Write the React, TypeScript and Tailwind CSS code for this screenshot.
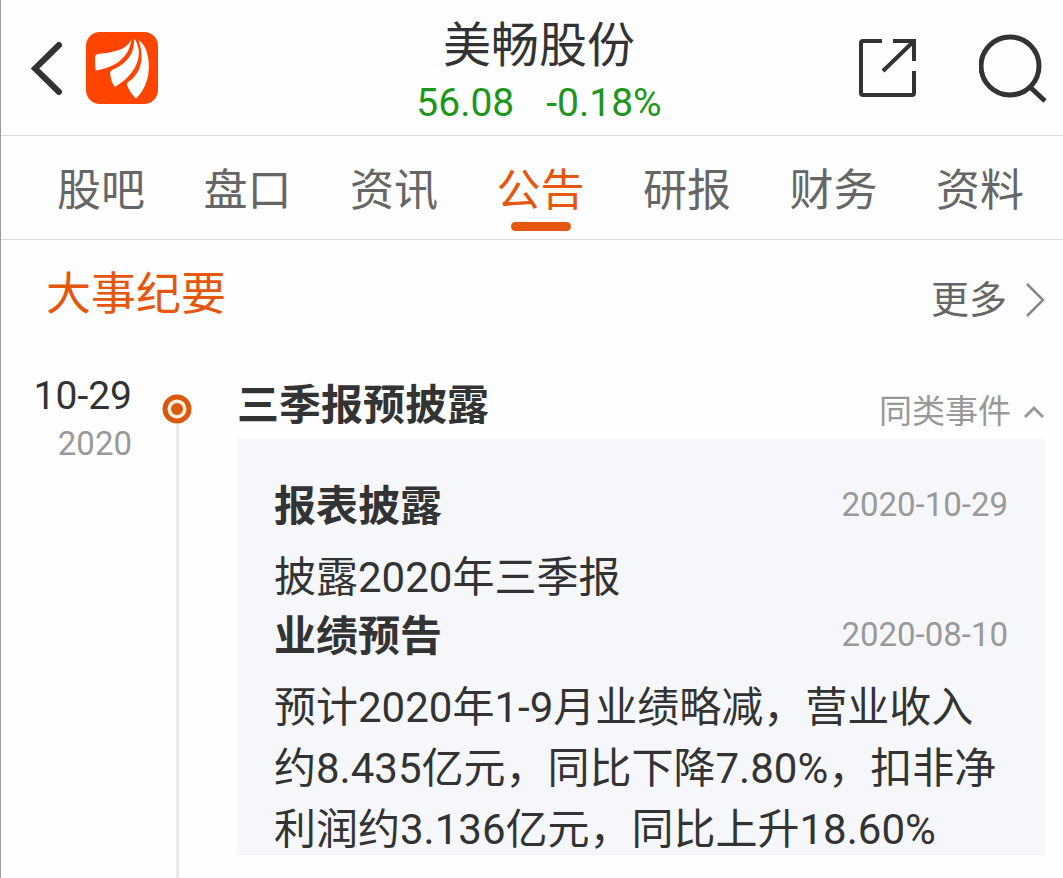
import React from "react";

const tabs = ["股吧", "盘口", "资讯", "公告", "研报", "财务", "资料"];

const events = [
  { title: "报表披露", date: "2020-10-29", body: "披露2020年三季报" },
  {
    title: "业绩预告",
    date: "2020-08-10",
    body: "预计2020年1-9月业绩略减，营业收入约8.435亿元，同比下降7.80%，扣非净利润约3.136亿元，同比上升18.60%",
  },
];

function Header() {
  return (
    <header className="grid h-[136px] grid-cols-[1fr_auto_1fr] items-center border-b border-[#d9d9d9] pr-[14px] pl-7">
      <div className="flex items-center gap-[21px]">
        <button type="button" aria-label="返回">
          <svg width="35" height="60" viewBox="0 0 35 60" fill="none" stroke="#333" strokeWidth="6" strokeLinecap="round" strokeLinejoin="miter">
            <path d="M30 7 L6 30.500 L30 54" />
          </svg>
        </button>
        <a href="#home" aria-label="首页">
          <svg width="74" height="74" viewBox="0 0 74 74">
            <rect x="1" y="1" width="72" height="72" rx="14" fill="#ff4400" />
            <path d="M46.500 8 C43 17 33 21 13 23 Q10 23.500 10 27 L10.500 39.500 C27 37 44 29 46.500 8Z" fill="#fff" />
            <path d="M49 8 C50 22 42 33 27 39 Q25 40 25 43 Q26 50 29.500 56 C46 47 58 30 52.500 14 Q51 9 49 8Z" fill="#fff" />
            <path d="M53.500 9 C60 27 56 43 43 51 Q41.500 52 42 54 Q45 62 51 67.500 C61 58 66 43 63 26 Q61 14 53.500 9Z" fill="#fff" />
          </svg>
        </a>
      </div>
      <div className="flex flex-col items-center pt-[6px]">
        <h1 className="text-5xl leading-[64px] text-[#333]">美畅股份</h1>
        <p className="flex gap-8 text-[39px] leading-[50px] text-[#1c961c]">
          <span>56.08</span>
          <span>-0.18%</span>
        </p>
      </div>
      <div className="flex items-center justify-end gap-[61px]">
        <button type="button" aria-label="分享">
          <svg width="60" height="60" viewBox="0 0 60 60" fill="none" stroke="#333" strokeWidth="4">
            <path d="M24 3 H5 Q3 3 3 5 V55 Q3 57 5 57 H54 Q56 57 56 55 V33" />
            <path d="M35 3 H56 V23 M56 3 L25 33" />
          </svg>
        </button>
        <button type="button" aria-label="搜索">
          <svg width="70" height="70" viewBox="0 0 70 70" fill="none" stroke="#333" strokeWidth="5">
            <circle cx="31" cy="33" r="29" />
            <path d="M51 54 L66 68" />
          </svg>
        </button>
      </div>
    </header>
  );
}

function Tabs() {
  return (
    <nav className="flex h-[104px] justify-between border-b border-[#d9d9d9] pr-[39px] pl-14">
      {tabs.map((tab) => {
        const active = tab === "公告";
        return (
          <a
            key={tab}
            href={`#${tab}`}
            aria-current={active ? "page" : undefined}
            className={`flex flex-col items-center pt-6 text-[44px] leading-[62px] ${active ? "text-[#e4570d]" : "text-[#666]"}`}
          >
            {tab}
            {active && <span className="h-[9px] w-15 rounded-full bg-[#e4570d]" />}
          </a>
        );
      })}
    </nav>
  );
}

function Timeline() {
  return (
    <section className="flex grow pr-[18px]">
      <div className="w-[131px] shrink-0 text-right">
        <p className="mt-4 text-[39px] leading-[52px]">10-29</p>
        <p className="text-[33px] leading-[44px] text-[#999]">2020</p>
      </div>
      <div className="ml-[30px] flex w-[30px] shrink-0 flex-col items-center pt-10">
        <svg width="30" height="30" viewBox="0 0 30 30">
          <circle cx="15" cy="15" r="14.500" fill="#d9590f" />
          <circle cx="15" cy="15" r="9.500" fill="#fff0dc" />
          <circle cx="15" cy="15" r="6" fill="#d9590f" />
        </svg>
        <span className="w-[3px] grow bg-[#ebebeb]" />
      </div>
      <div className="ml-[45px] min-w-0 grow">
        <div className="flex h-[85px] items-end justify-between">
          <h3 className="text-[42px] leading-[66px] font-bold">三季报预披露</h3>
          <button type="button" className="flex items-center gap-3 text-[33px] leading-[54px] text-[#999]">
            同类事件
            <svg width="22" height="14" viewBox="0 0 22 14" fill="none" stroke="#999" strokeWidth="3">
              <path d="M2 12 L11 3 L20 12" />
            </svg>
          </button>
        </div>
        <div className="flex flex-col bg-[#f6f7fa] pt-[39px] pr-[37px] pl-[37px]">
          {events.map((event) => (
            <article key={event.date} className="last:-mb-[5px]">
              <div className="flex items-start justify-between">
                <h4 className="text-[42px] leading-[58px] font-bold">{event.title}</h4>
                <time className="text-[33px] leading-[54px] text-[#999]">{event.date}</time>
              </div>
              <p className="mt-[11px] text-[42px] leading-[61px]">{event.body}</p>
            </article>
          ))}
        </div>
      </div>
    </section>
  );
}

export default function App() {
  return (
    <main className="flex min-h-screen flex-col border-l border-[#999] bg-[#fefefe] font-[Roboto,'Noto_Sans_CJK_SC',sans-serif] text-[#333]">
      <Header />
      <Tabs />
      <div className="flex h-[114px] items-start justify-between pr-[18px] pl-[45px]">
        <h2 className="pt-[22px] text-[45px] leading-[66px] text-[#e4570d]">大事纪要</h2>
        <a href="#more" className="flex items-center gap-[18px] pt-[30px] text-[38px] leading-[60px] text-[#666]">
          更多
          <svg width="20" height="36" viewBox="0 0 20 36" fill="none" stroke="#888" strokeWidth="2.500">
            <path d="M2 2 L18 18 L2 34" />
          </svg>
        </a>
      </div>
      <Timeline />
    </main>
  );
}
